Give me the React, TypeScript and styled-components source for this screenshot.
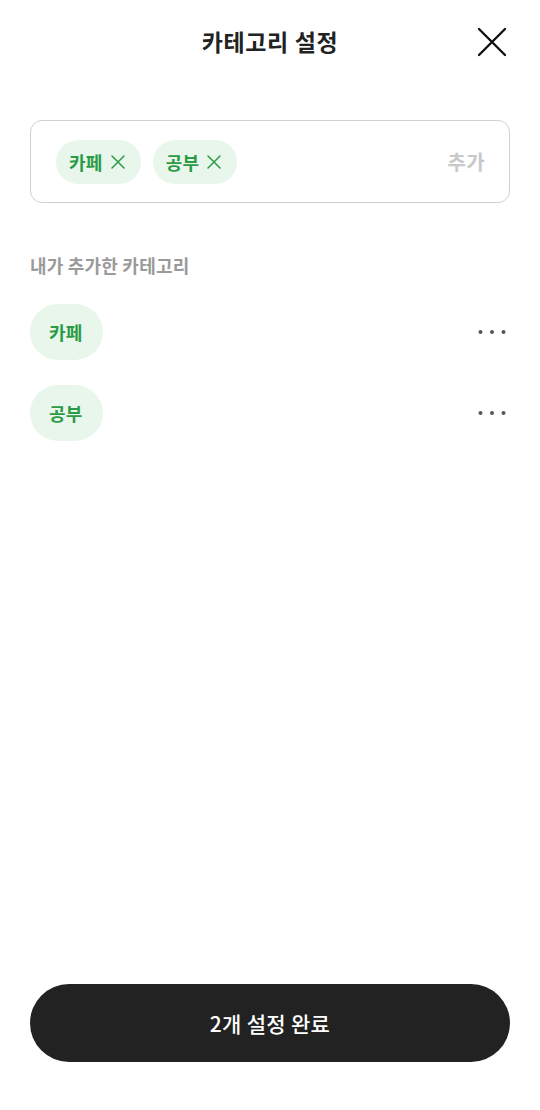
import React from "react";
import styled, { createGlobalStyle } from "styled-components";

const Global = createGlobalStyle`
  html, body { margin: 0; padding: 0; background: #fff; }
  body { font-family: "Noto Sans CJK KR", "Noto Sans", sans-serif; }
  * { box-sizing: border-box; }
`;

const Page = styled.div`
  width: 540px;
  height: 1110px;
  display: flex;
  flex-direction: column;
  padding: 0 30px 48px;
`;

const Header = styled.header`
  height: 84px;
  padding-bottom: 3px;
  display: flex;
  align-items: center;
  justify-content: center;
  position: relative;
`;

const Title = styled.h1`
  margin: 0;
  font-size: 23px;
  font-weight: 700;
  color: #222;
  letter-spacing: 0.6px;
`;

const CloseBtn = styled.button`
  position: absolute;
  right: 2px;
  top: 26px;
  width: 32px;
  height: 32px;
  padding: 0;
  border: 0;
  background: none;
  display: flex;
  align-items: center;
  justify-content: center;
`;

const InputBox = styled.div`
  margin-top: 36px;
  height: 83px;
  border: 1.5px solid #d0d0d0;
  border-radius: 12px;
  display: flex;
  align-items: center;
  padding: 0 24px 0 25px;
  gap: 12px;
`;

const Chip = styled.span`
  height: 44px;
  border-radius: 22px;
  background: #e8f6eb;
  color: #2b9b46;
  font-size: 18px;
  font-weight: 700;
  letter-spacing: 0.3px;
  display: inline-flex;
  align-items: center;
  gap: 8px;
  padding: 0 16px 0 13px;
`;

const AddText = styled.span`
  margin-left: auto;
  font-size: 20px;
  font-weight: 700;
  color: #c8c8c8;
  letter-spacing: 0.3px;
`;

const SectionLabel = styled.h2`
  margin: 50px 0 0;
  font-size: 18px;
  font-weight: 700;
  color: #9a9a9a;
  line-height: 25px;
  letter-spacing: 0.2px;
`;

const List = styled.ul`
  list-style: none;
  margin: 26px 0 0;
  padding: 0;
  display: flex;
  flex-direction: column;
  gap: 25px;
`;

const Row = styled.li`
  display: flex;
  align-items: center;
  justify-content: space-between;
`;

const ListChip = styled.span`
  height: 56px;
  border-radius: 28px;
  background: #e8f6eb;
  color: #2b9b46;
  font-size: 18px;
  font-weight: 700;
  letter-spacing: 0.3px;
  display: inline-flex;
  align-items: center;
  padding: 0 20px 0 19px;
`;

const MoreBtn = styled.button`
  border: 0;
  background: none;
  padding: 0;
  margin-right: 4px;
  width: 30px;
  height: 20px;
  display: flex;
  align-items: center;
  justify-content: flex-end;
`;

const Spacer = styled.div`
  flex: 1;
`;

const Done = styled.button`
  height: 78px;
  width: 100%;
  border: 0;
  border-radius: 39px;
  background: #222;
  color: #fff;
  font-family: "Noto Sans CJK KR", "Noto Sans", sans-serif;
  font-size: 21px;
  font-weight: 500;
  letter-spacing: 0.3px;
`;

const XSmall = () => (
  <svg width="14" height="14" viewBox="0 0 14 14" fill="none" stroke="#2b9b46" strokeWidth="1.5" strokeLinecap="round">
    <path d="M1 1L13 13M13 1L1 13" />
  </svg>
);

const Dots = () => (
  <svg width="28" height="6" viewBox="0 0 28 6">
    <circle cx="2.5" cy="3" r="2" fill="#555" />
    <circle cx="14" cy="3" r="2" fill="#555" />
    <circle cx="25.5" cy="3" r="2" fill="#555" />
  </svg>
);

const categories = ["카페", "공부"];

export default function App() {
  return (
    <>
      <Global />
      <Page>
        <Header>
          <Title>카테고리 설정</Title>
          <CloseBtn aria-label="닫기">
            <svg width="30" height="30" viewBox="0 0 30 30" fill="none" stroke="#111" strokeWidth="2.4" strokeLinecap="round">
              <path d="M2 2L28 28M28 2L2 28" />
            </svg>
          </CloseBtn>
        </Header>
        <InputBox>
          {categories.map((c) => (
            <Chip key={c}>
              {c}
              <XSmall />
            </Chip>
          ))}
          <AddText>추가</AddText>
        </InputBox>
        <SectionLabel>내가 추가한 카테고리</SectionLabel>
        <List>
          {categories.map((c) => (
            <Row key={c}>
              <ListChip>{c}</ListChip>
              <MoreBtn aria-label="더보기">
                <Dots />
              </MoreBtn>
            </Row>
          ))}
        </List>
        <Spacer />
        <Done>2개 설정 완료</Done>
      </Page>
    </>
  );
}
